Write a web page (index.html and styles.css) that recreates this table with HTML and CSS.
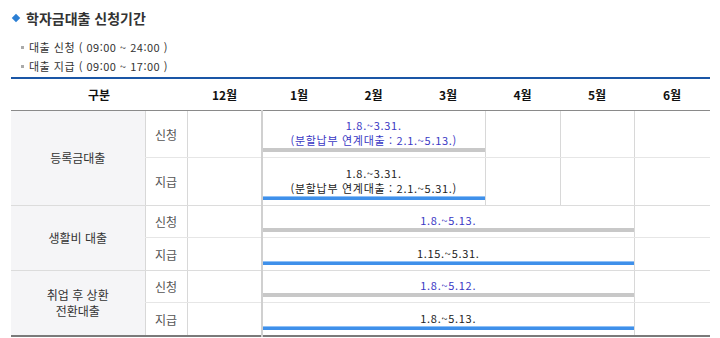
FILE: index.html
```html
<!DOCTYPE html>
<html lang="ko">
<head>
<meta charset="utf-8">
<link rel="stylesheet" href="styles.css">
</head>
<body>
<div class="page">
  <h2 class="title"><span class="diamond"></span>학자금대출 신청기간</h2>
  <ul class="notes">
    <li>대출 신청 ( 09:00 ~ 24:00 )</li>
    <li>대출 지급 ( 09:00 ~ 17:00 )</li>
  </ul>
  <table class="sched">
    <colgroup>
      <col class="c-name"><col class="c-type">
      <col class="c75"><col class="c74"><col class="c75"><col class="c74"><col class="c75"><col class="c74"><col class="c76">
    </colgroup>
    <thead>
      <tr>
        <th colspan="2">구분</th>
        <th>12월</th><th>1월</th><th>2월</th><th>3월</th><th>4월</th><th>5월</th><th>6월</th>
      </tr>
    </thead>
    <tbody>
      <tr class="r-tall">
        <td rowspan="2" class="name">등록금대출</td>
        <td class="type">신청</td>
        <td></td>
        <td colspan="3" class="bar-cell apply"><div class="txt">1.8.~3.31.<br>(분할납부 연계대출 : 2.1.~5.13.)</div><div class="bar gray"></div></td>
        <td></td><td></td><td></td>
      </tr>
      <tr class="r-tall2">
        <td class="type">지급</td>
        <td></td>
        <td colspan="3" class="bar-cell pay"><div class="txt">1.8.~3.31.<br>(분할납부 연계대출 : 2.1.~5.31.)</div><div class="bar blue"></div></td>
        <td></td><td></td><td></td>
      </tr>
      <tr class="r-short">
        <td rowspan="2" class="name">생활비 대출</td>
        <td class="type">신청</td>
        <td></td>
        <td colspan="5" class="bar-cell apply"><div class="txt">1.8.~5.13.</div><div class="bar gray"></div></td>
        <td></td>
      </tr>
      <tr class="r-short2">
        <td class="type">지급</td>
        <td></td>
        <td colspan="5" class="bar-cell pay"><div class="txt">1.15.~5.31.</div><div class="bar blue"></div></td>
        <td></td>
      </tr>
      <tr class="r-short">
        <td rowspan="2" class="name">취업 후 상환<br>전환대출</td>
        <td class="type">신청</td>
        <td></td>
        <td colspan="5" class="bar-cell apply"><div class="txt">1.8.~5.12.</div><div class="bar gray"></div></td>
        <td></td>
      </tr>
      <tr class="r-short2 last">
        <td class="type">지급</td>
        <td></td>
        <td colspan="5" class="bar-cell pay"><div class="txt">1.8.~5.13.</div><div class="bar blue"></div></td>
        <td></td>
      </tr>
    </tbody>
  </table>
</div>
</body>
</html>
```

FILE: styles.css
```css
html, body {
  margin: 0;
  padding: 0;
  background: #fff;
}
body {
  font-family: "Noto Sans CJK KR", "Noto Sans", sans-serif;
  color: #333;
}
.page {
  padding: 8px 10px 0 11px;
}
.title {
  margin: 0;
  display: flex;
  align-items: center;
  gap: 7px;
  font-size: 14px;
  font-weight: bold;
  line-height: 20px;
  color: #333;
}
.diamond {
  width: 6px;
  height: 6px;
  margin-left: 2px;
  background: #2b7fd4;
  transform: rotate(45deg);
}
.notes {
  list-style: none;
  margin: 10px 0 0 0;
  padding: 0 0 0 10px;
  font-size: 11px;
  line-height: 19px;
  letter-spacing: 0.5px;
  color: #333;
}
.notes li {
  display: flex;
  align-items: center;
  gap: 5px;
}
.notes li::before {
  content: "";
  width: 3px;
  height: 3px;
  background: #aaa;
}
.sched {
  margin-top: 1px;
  width: 699px;
  border-collapse: collapse;
  table-layout: fixed;
  border-top: 2px solid #1a56a6;
  border-bottom: 2px solid #7a7a7a;
  font-size: 11px;
}
.c-name { width: 134px; }
.c-type { width: 42px; }
.c75 { width: 75px; }
.c74 { width: 74px; }
.c76 { width: 76px; }
.sched th {
  height: 31px;
  padding: 0;
  font-size: 12px;
  font-weight: bold;
  color: #111;
  border-bottom: 1px solid #8a8a8a;
}
.sched td {
  padding: 0;
  border-left: 1px solid #d8d8d8;
  border-bottom: 1px solid #e6e6e6;
  text-align: center;
  vertical-align: middle;
}
.sched td.name {
  border-left: none;
  background: #f5f5f7;
  color: #333;
  font-size: 12px;
  line-height: 16px;
  border-bottom: 1px solid #dcdcdc;
}
.sched td.type {
  color: #555;
  font-size: 12px;
}
.r-tall td { height: 41px; }
.r-tall2 td { height: 42px; }
.r-short td { height: 26px; }
.r-short2 td { height: 27px; }
.r-tall2 td, .r-short2 td { border-bottom-color: #dcdcdc; }
.last td { border-bottom: none; }
.sched td.bar-cell {
  vertical-align: bottom;
  padding-bottom: 5px;
  border-left: 2px solid #d0d0d0;
}
.txt {
  line-height: 15px;
  font-size: 11px;
  letter-spacing: 0.7px;
}
.apply .txt { color: #3a38c4; }
.pay .txt { color: #222; }
.bar {
  height: 4px;
  box-sizing: border-box;
}
.bar.gray { background: #c8c8c8; }
.bar.blue {
  background: #3f90ea;
  border-top: 1px solid #8fc0f6;
}
```
